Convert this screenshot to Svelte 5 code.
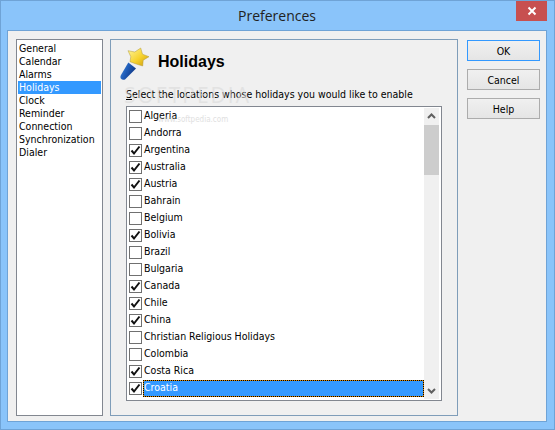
<script>
	const sections = ['General', 'Calendar', 'Alarms', 'Holidays', 'Clock', 'Reminder', 'Connection', 'Synchronization', 'Dialer'];
	let locations = [
		['Algeria', false],
		['Andorra', false],
		['Argentina', true],
		['Australia', true],
		['Austria', true],
		['Bahrain', false],
		['Belgium', false],
		['Bolivia', true],
		['Brazil', false],
		['Bulgaria', false],
		['Canada', true],
		['Chile', true],
		['China', true],
		['Christian Religious Holidays', false],
		['Colombia', false],
		['Costa Rica', true],
		['Croatia', true]
	];
</script>

<div class="window">
	<header class="titlebar">
		<span class="title">Preferences</span>
		<button class="close" aria-label="Close">
			<svg width="10" height="10" viewBox="0 0 10 10">
				<path d="M1.5 1.5 L8.5 8.5 M8.5 1.5 L1.5 8.5" stroke="#fff" stroke-width="2" />
			</svg>
		</button>
	</header>

	<div class="client">
		<ul class="nav">
			{#each sections as s}
				<li class:active={s === 'Holidays'}>{s}</li>
			{/each}
		</ul>

		<section class="panel">
			<div class="heading">
				<svg class="wand" width="29" height="33" viewBox="0 0 29 33">
					<defs>
						<linearGradient id="stick" x1="0" y1="0" x2="1" y2="0.5">
							<stop offset="0" stop-color="#4a90e0" />
							<stop offset="0.5" stop-color="#1f5cb8" />
							<stop offset="1" stop-color="#0f3580" />
						</linearGradient>
						<linearGradient id="star" x1="0" y1="0" x2="1" y2="1">
							<stop offset="0" stop-color="#fff6a0" />
							<stop offset="0.55" stop-color="#f6d22c" />
							<stop offset="1" stop-color="#c8960f" />
						</linearGradient>
					</defs>
					<path d="M8.3 15.5 L16 21.5 L5 32.5 Q2.5 33.5 0.8 31.5 Q0 30 1 28 Z" fill="url(#stick)" />
					<path d="M8 3.7 L14.8 5 L20.7 1 L22.5 7.2 L29 9.7 L23.2 13.2 L22.7 19 L16.2 17 L10 14.7 L10.8 9.7 Z" fill="url(#star)" stroke="#b39a3a" stroke-width="0.5" />
				</svg>
				<h1>Holidays</h1>
			</div>
			<p class="hint"><u>S</u>elect the locations whose holidays you would like to enable</p>
			<span class="mark big">SOFTPEDIA</span>
			<span class="mark small">www.softpedia.com</span>

			<div class="listbox">
				<div class="rows">
					{#each locations as [name, checked]}
						<div class="row" class:selected={name === 'Croatia'}>
							<span class="box">
								{#if checked}
									<svg width="11" height="11" viewBox="0 0 11 11">
										<path d="M1.5 5.5 L4 8.5 L9.5 1.5" fill="none" stroke="#111" stroke-width="2" />
									</svg>
								{/if}
							</span>
							<span class="label">{name}</span>
						</div>
					{/each}
				</div>
				<div class="scrollbar">
					<svg width="15" height="17" viewBox="0 0 15 17">
						<path d="M4 10 L7.5 6.5 L11 10" fill="none" stroke="#606060" stroke-width="2" />
					</svg>
					<div class="track"><div class="thumb"></div></div>
					<svg width="15" height="17" viewBox="0 0 15 17">
						<path d="M4 7 L7.5 10.5 L11 7" fill="none" stroke="#606060" stroke-width="2" />
					</svg>
				</div>
			</div>
		</section>

		<div class="actions">
			<button class="btn default">OK</button>
			<button class="btn">Cancel</button>
			<button class="btn">Help</button>
		</div>
	</div>
</div>

<style>
	:global(body) {
		margin: 0;
	}

	.window {
		width: 555px;
		height: 430px;
		box-sizing: border-box;
		background: #8ac4fa;
		border: 1px solid #6fa3d6;
		padding: 0 7px 7px 6px;
		display: flex;
		flex-direction: column;
		font-family: 'DejaVu Sans Condensed', 'DejaVu Sans', sans-serif;
		font-size: 10.5px;
		color: #000;
	}

	.titlebar {
		height: 29px;
		flex: none;
		position: relative;
		display: flex;
		align-items: center;
		justify-content: center;
	}

	.title {
		font-family: 'Open Sans', sans-serif;
		font-size: 14px;
		color: #222;
	}

	.close {
		position: absolute;
		right: 0;
		top: 0;
		width: 31px;
		height: 20px;
		border: 0;
		padding: 0;
		background: #c75050;
		display: flex;
		align-items: center;
		justify-content: center;
	}

	.client {
		flex: 1;
		background: #f0f0f0;
		border: 1px solid #6fa3d6;
		padding: 8px 6px 5px 8px;
		display: flex;
		min-height: 0;
	}

	.nav {
		list-style: none;
		margin: 0 7px 0 0;
		padding: 2px 1px;
		width: 83px;
		flex: none;
		box-sizing: content-box;
		background: #fff;
		border: 1px solid #828790;
		height: 371px;
	}

	.nav li {
		height: 13px;
		line-height: 13px;
		padding-left: 1px;
	}

	.nav li.active {
		background: #3399ff;
		color: #fff;
	}

	.panel {
		position: relative;
		width: 348px;
		box-sizing: border-box;
		height: 377px;
		flex: none;
		border: 1px solid #7f9db9;
		padding: 7px 15px 0;
		margin-right: 9px;
	}

	.heading {
		display: flex;
		align-items: flex-start;
		height: 38px;
		margin-left: -6px;
		gap: 9px;
	}

	.heading h1 {
		margin: 6px 0 0;
		font-size: 16px;
		line-height: 18px;
		font-weight: bold;
		font-family: 'Liberation Sans', Arial, sans-serif;
	}

	.hint {
		margin: 0;
		height: 16px;
		line-height: 16px;
		margin-top: 1px;
		white-space: nowrap;
	}

	.mark {
		position: absolute;
		color: #dadada;
		opacity: 0.6;
		pointer-events: none;
		white-space: nowrap;
	}

	.mark.big {
		left: 13px;
		top: 41px;
		font-family: 'Open Sans', sans-serif;
		font-size: 21px;
		letter-spacing: 2px;
	}

	.mark.small {
		left: 47px;
		top: 75px;
		font-size: 8px;
		color: #ccc;
		z-index: 2;
	}

	.listbox {
		position: relative;
		display: flex;
		height: 295px;
		box-sizing: border-box;
		background: #fff;
		border: 1px solid #828790;
		padding: 1px 2px 1px 0;
		margin-top: 4px;
	}

	.rows {
		flex: 1;
		min-width: 0;
	}

	.row {
		height: 17px;
		display: flex;
		align-items: center;
		padding-left: 2px;
		gap: 1px;
	}

	.box {
		width: 11px;
		height: 11px;
		flex: none;
		border: 1px solid #707070;
		background: #fff;
		display: flex;
		align-items: center;
		justify-content: center;
	}

	.label {
		flex: 1;
		height: 17px;
		line-height: 15px;
		padding-left: 1px;
		box-sizing: border-box;
	}

	.row.selected .label {
		background: #3399ff;
		color: #fff;
		box-shadow: inset 0 0 0 1px #e08a00;
		outline: 1px dotted #000;
		outline-offset: -1px;
	}

	.scrollbar {
		width: 15px;
		flex: none;
		background: #f0f0f0;
		display: flex;
		flex-direction: column;
	}

	.track {
		flex: 1;
	}

	.thumb {
		height: 50px;
		background: #cdcdcd;
	}

	.actions {
		display: flex;
		flex-direction: column;
		gap: 8px;
		padding-top: 1px;
	}

	.btn {
		width: 73px;
		height: 21px;
		padding: 0;
		font: inherit;
		color: #000;
		background: linear-gradient(#f0f0f0, #e5e5e5);
		border: 1px solid #acacac;
	}

	.btn.default {
		border-color: #3399ff;
	}
</style>
